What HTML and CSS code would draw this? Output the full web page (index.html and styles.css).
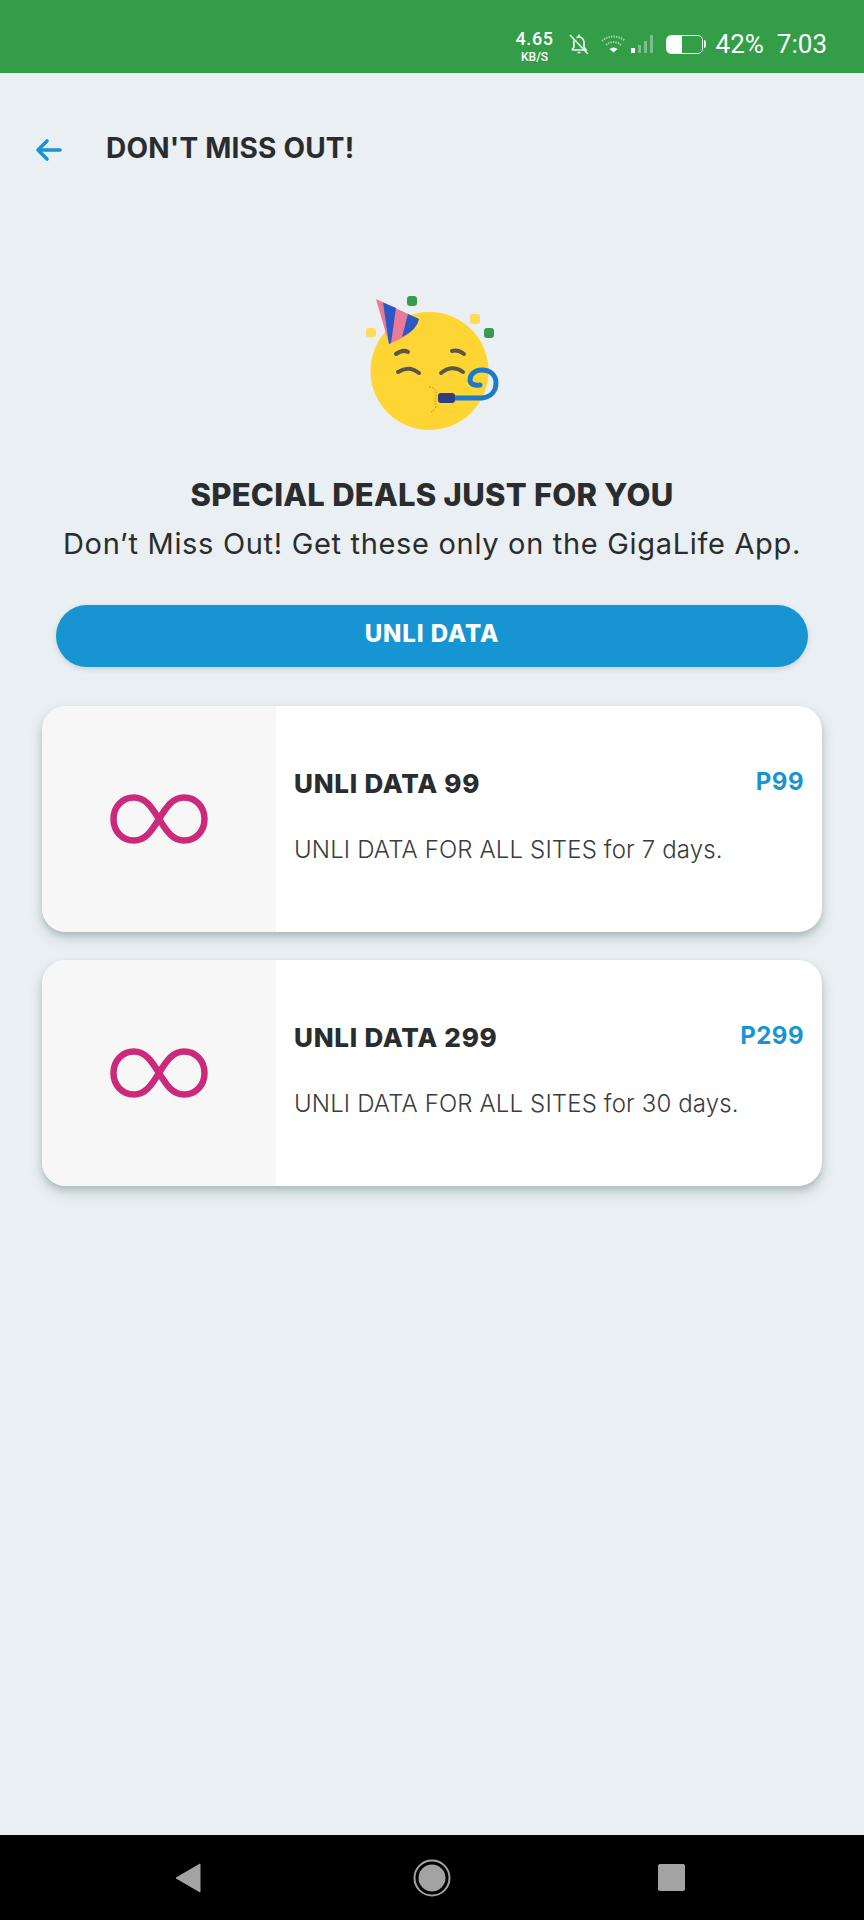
FILE: index.html
```html
<!DOCTYPE html>
<html lang="en">

<head>
  <meta charset="UTF-8">
  <meta name="viewport" content="width=device-width, initial-scale=1.0">
  <title>Don't Miss Out!</title>
  <link rel="stylesheet" href="styles.css">
</head>

<body>
  <div class="screen">
    <div class="status-bar">
      <div class="speed"><b>4.65</b><span>KB/S</span></div>
      <svg class="bell" width="20" height="24" viewBox="0 0 20 24" fill="none" stroke="#e6f3e8" stroke-width="1.700">
        <path d="M3 18h14l-2-3v-5a5 5 0 0 0-7.500-4.300M4.800 8.500 5 15l-2 3" />
        <path d="M8.500 20.500h3M10 2.500v2" />
        <path d="M1 3l18 19" />
      </svg>
      <svg class="wifi" width="25" height="18" viewBox="0 0 25 18">
        <path d="M1 6a17 17 0 0 1 23 0" fill="none" stroke="#9fcfa9" stroke-width="2" stroke-dasharray="1.500 1" />
        <path d="M5 10a11 11 0 0 1 15 0" fill="none" stroke="#9fcfa9" stroke-width="2" stroke-dasharray="1.500 1" />
        <path d="M8.500 14a6 6 0 0 1 8 0l-4 3.500z" fill="#fff" />
      </svg>
      <svg class="signal" width="24" height="20" viewBox="0 0 24 20">
        <rect x="0" y="14" width="4" height="5" fill="#fff" />
        <rect x="7" y="11" width="3" height="8" fill="#7dbd8b" />
        <rect x="13" y="7" width="3" height="12" fill="#7dbd8b" />
        <rect x="19" y="1" width="3" height="18" fill="#7dbd8b" />
      </svg>
      <div class="battery">
        <div class="battery-fill"></div>
      </div>
      <span class="percent">42%</span>
      <span class="clock">7:03</span>
    </div>

    <header class="top-bar">
      <svg class="back" width="28" height="24" viewBox="0 0 28 24" fill="none" stroke="#1794d2" stroke-width="3.600" stroke-linecap="round" stroke-linejoin="round">
        <path d="M25 12H3M12 3l-9 9 9 9" />
      </svg>
      <h1>DON'T MISS OUT!</h1>
    </header>

    <main class="content">
      <svg class="party" width="180" height="170" viewBox="0 0 180 170">
        <circle cx="89.500" cy="91" r="59" fill="#fed533" />
        <!-- party hat -->
        <path d="M36 19 79 39Q75 54 49 64Z" fill="#e97b98" />
        <path d="M43 22.500 56 28 51 63 49 64Z" fill="#2b58c4" />
        <path d="M68 34 79 39Q77 50 62 57Z" fill="#2b58c4" />
        <!-- confetti -->
        <rect x="26" y="48" width="10" height="9" rx="2.500" fill="#fcdc5a" />
        <rect x="130" y="34" width="10" height="10" rx="2.500" fill="#fcdc5a" />
        <g fill="#3b9a52">
          <rect x="67" y="16" width="10" height="10" rx="3" />
          <rect x="144" y="48" width="10" height="10" rx="3" />
        </g>
        <!-- eyes and brows -->
        <g fill="none" stroke="#5b5748" stroke-width="4" stroke-linecap="round">
          <path d="M56 74q7-5 12-2M112 71q6-2 12 3" />
          <path d="M58 92q11-7 21 1M101 93q11-9 22-1" />
        </g>
        <!-- mouth -->
        <path d="M89 107q9 1 7 9-1 5-1 7 3 5-4 9" fill="none" stroke="#e0653a" stroke-width="1" stroke-dasharray="1.500 1.500" />
        <!-- blower -->
        <path d="M112 118h30c9-1 14-7 14-15 0-8-6-13-14-13-8 0-12 5-12 10 0 4 5 6 10 5" fill="none" stroke="#1c7ac9" stroke-width="5" stroke-linecap="round" />
        <rect x="98" y="113" width="17" height="10" rx="3" fill="#2e3f7d" />
      </svg>
      <h2>SPECIAL DEALS JUST FOR YOU</h2>
      <p class="lead">Don’t Miss Out! Get these only on the GigaLife App.</p>
      <button type="button" class="tab">UNLI DATA</button>

      <article class="deal">
        <div class="deal-icon">
          <svg width="98" height="50" viewBox="0 0 98 50" fill="none" stroke="#cb2a7c" stroke-width="6.500">
            <path d="M49 25C41 12 35 3.500 24 3.500 12 3.500 3.500 13 3.500 25S12 46.500 24 46.500C35 46.500 41 38 49 25 57 12 63 3.500 74 3.500 86 3.500 94.500 13 94.500 25S86 46.500 74 46.500C63 46.500 57 38 49 25Z" />
          </svg>
        </div>
        <div class="deal-body">
          <div class="deal-head">
            <h3>UNLI DATA 99</h3>
            <span class="price">P99</span>
          </div>
          <p>UNLI DATA FOR ALL SITES for 7 days.</p>
        </div>
      </article>

      <article class="deal">
        <div class="deal-icon">
          <svg width="98" height="50" viewBox="0 0 98 50" fill="none" stroke="#cb2a7c" stroke-width="6.500">
            <path d="M49 25C41 12 35 3.500 24 3.500 12 3.500 3.500 13 3.500 25S12 46.500 24 46.500C35 46.500 41 38 49 25 57 12 63 3.500 74 3.500 86 3.500 94.500 13 94.500 25S86 46.500 74 46.500C63 46.500 57 38 49 25Z" />
          </svg>
        </div>
        <div class="deal-body">
          <div class="deal-head">
            <h3>UNLI DATA 299</h3>
            <span class="price">P299</span>
          </div>
          <p>UNLI DATA FOR ALL SITES for 30 days.</p>
        </div>
      </article>
    </main>

    <nav class="nav-bar">
      <svg class="nav-back" width="26" height="30" viewBox="0 0 26 30">
        <path d="M25 1v28L1 15z" fill="#a3a3a3" stroke="#a3a3a3" stroke-linejoin="round" />
      </svg>
      <svg width="38" height="38" viewBox="0 0 38 38">
        <circle cx="19" cy="19" r="17.500" fill="none" stroke="#a3a3a3" stroke-width="2" />
        <circle cx="19" cy="19" r="13.500" fill="#a3a3a3" />
      </svg>
      <div class="nav-square"></div>
    </nav>
  </div>
</body>

</html>
```

FILE: styles.css
```css
* {
  box-sizing: border-box;
}

body {
  margin: 0;
  background: #e9eff3;
  font-family: Inter, "Liberation Sans", sans-serif;
  color: #2a2c2d;
}

h1,
h2,
h3,
p {
  margin: 0;
}

.screen {
  display: flex;
  flex-direction: column;
  height: 1920px;
}

/* status bar */
.status-bar {
  display: flex;
  align-items: center;
  justify-content: flex-end;
  height: 73px;
  padding: 15px 37px 0 0;
  background: #339d48;
  color: #fff;
  font-family: Roboto, sans-serif;
}

.speed {
  display: flex;
  flex-direction: column;
  align-items: center;
  width: 40px;
  margin-top: 5px;
  line-height: 1;
}

.speed b {
  font-size: 18px;
  letter-spacing: 0.6px;
  font-weight: 500;
}

.speed span {
  margin-top: 3px;
  font-size: 12px;
  font-weight: 500;
}

.bell {
  margin-left: 14px;
}

.wifi {
  margin-left: 12px;
}

.signal {
  margin-left: 5px;
}

.battery {
  position: relative;
  width: 37px;
  height: 19px;
  margin: 0 3px 0 11px;
  border: 1.500px solid #e6f3e8;
  border-radius: 5px;
}

/* battery terminal */
.battery::after {
  content: "";
  position: absolute;
  top: 4px;
  right: -4.500px;
  width: 2px;
  height: 8px;
  border-radius: 0 2px 2px 0;
  background: #e6f3e8;
}

.battery-fill {
  width: 15px;
  height: 100%;
  border-radius: 3px 0 0 3px;
  background: #fff;
}

.percent {
  margin-left: 10px;
  font-size: 26px;
}

.clock {
  margin-left: 13px;
  font-size: 26px;
}

/* page header */
.top-bar {
  display: flex;
  align-items: center;
  height: 148px;
  padding: 2px 0 0 35px;
}

.back {
  margin-top: 4px;
}

.top-bar h1 {
  margin-left: 43px;
  font-size: 28px;
  letter-spacing: 0.2px;
  font-weight: 700;
}

/* main column */
.content {
  flex: 1;
  display: flex;
  flex-direction: column;
  align-items: center;
  padding: 0 42px;
}

.party {
  margin: 59px 4px 0 0;
}

.content h2 {
  margin-top: 25px;
  font-size: 31px;
  letter-spacing: 0.25px;
  line-height: 40px;
  font-weight: 800;
}

.lead {
  margin-top: 9px;
  font-size: 29px;
  letter-spacing: 0.68px;
  line-height: 40px;
  font-weight: 400;
}

.tab {
  width: 752px;
  height: 62px;
  margin-top: 41px;
  padding: 0 0 5px;
  border: none;
  border-radius: 31px;
  background: #1794d2;
  box-shadow: 0 2px 5px rgba(90, 120, 130, 0.25);
  color: #fff;
  font-family: inherit;
  font-size: 24px;
  letter-spacing: 0.9px;
  font-weight: 800;
}

/* deal cards */
.deal {
  display: flex;
  width: 780px;
  height: 226px;
  margin-top: 39px;
  border-radius: 24px;
  background: #fff;
  box-shadow: 0 4px 6px rgba(90, 115, 115, 0.3), 0 7px 14px rgba(90, 115, 115, 0.18);
  overflow: hidden;
}

.deal+.deal {
  margin-top: 28px;
}

.deal-icon {
  display: flex;
  align-items: center;
  justify-content: center;
  width: 234px;
  background: #f7f7f8;
}

.deal-body {
  flex: 1;
  padding: 60px 18px 0;
}

.deal-head {
  display: flex;
  justify-content: space-between;
}

.deal-head h3 {
  font-size: 26px;
  letter-spacing: 0.75px;
  line-height: 36px;
  font-weight: 800;
}

.price {
  color: #1794d2;
  font-size: 24px;
  letter-spacing: 0.5px;
  line-height: 32px;
  font-weight: 700;
}

.deal-body p {
  margin-top: 30px;
  font-size: 24px;
  letter-spacing: 0.14px;
  line-height: 36px;
  font-weight: 300;
  color: #3a3c3d;
}

/* system navigation */
.nav-bar {
  display: flex;
  align-items: center;
  justify-content: space-between;
  height: 85px;
  padding: 0 179px 0 175px;
  background: #000;
}

.nav-back {
  margin-right: 5px;
}

.nav-square {
  width: 27px;
  height: 27px;
  border-radius: 2px;
  background: #a3a3a3;
}
```
